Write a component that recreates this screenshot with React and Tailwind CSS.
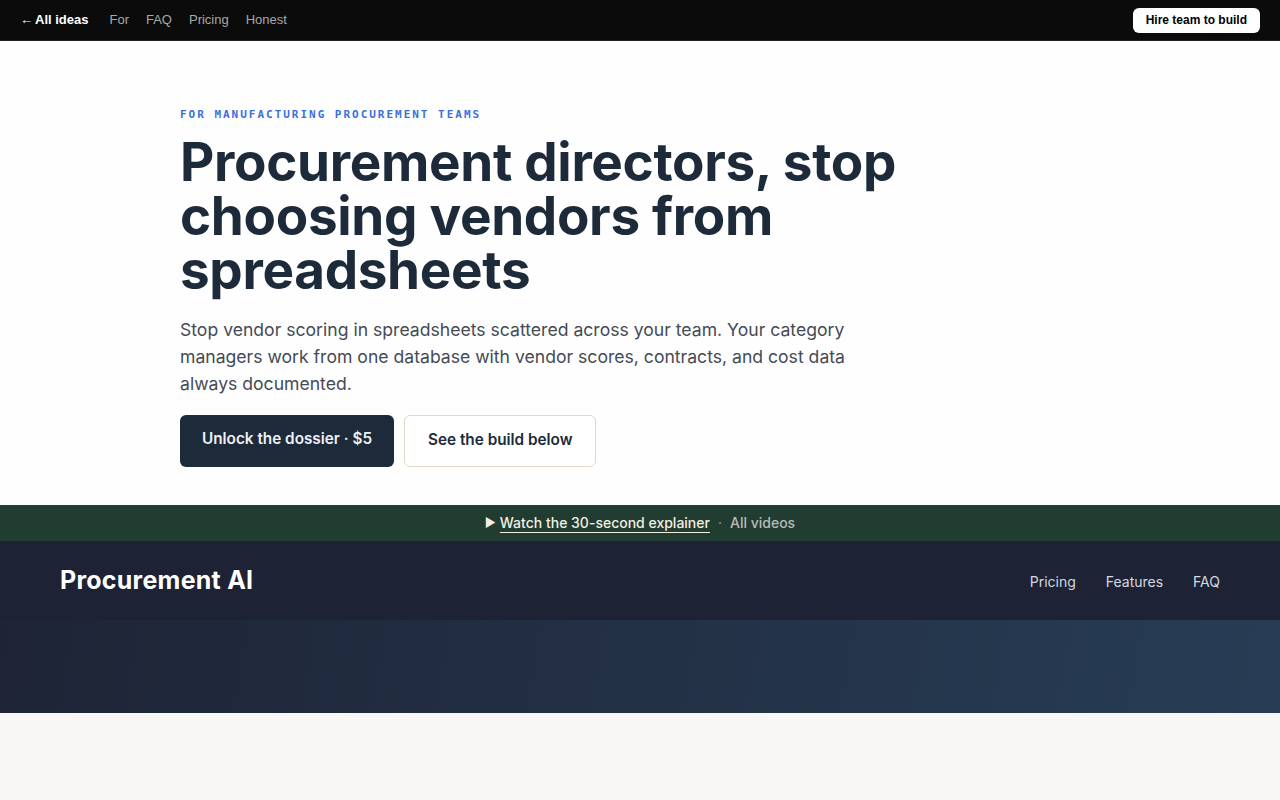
export default function App() {
  return (
    <div className="min-h-screen bg-[#f8f7f5] font-['Inter',sans-serif]">
      {/* top bar */}
      <div className="flex h-[41px] items-center justify-between border-b border-[#222] bg-[#0b0b0b] px-5 font-['Liberation_Sans',Arial,sans-serif] text-[13px]">
        <div className="flex items-center gap-[17px]">
          <span className="mr-[4px] font-bold text-white">
            <span className="mr-[2px] font-normal">←</span>All ideas
          </span>
          <span className="text-[#a8a8a8]">For</span>
          <span className="text-[#a8a8a8]">FAQ</span>
          <span className="text-[#a8a8a8]">Pricing</span>
          <span className="text-[#a8a8a8]">Honest</span>
        </div>
        <button className="h-[25px] rounded-md bg-white px-[13px] text-[12px] font-bold text-black">
          Hire team to build
        </button>
      </div>

      {/* hero */}
      <section className="bg-[#fefefe] pb-[38px] pt-[66px]">
        <div className="ml-[180px] max-w-[740px]">
          <p className="font-['DejaVu_Sans_Mono',monospace] text-[11px] font-bold uppercase tracking-[0.18em] text-[#3b6fe0]">
            For manufacturing procurement teams
          </p>
          <h1 className="mt-[11px] text-[53px] font-bold leading-[54px] tracking-[-0.006em] text-[#1c2a3a]">
            Procurement directors, stop choosing vendors from spreadsheets
          </h1>
          <p className="mt-[19px] max-w-[680px] text-[17.6px] leading-[27px] text-[#454a54]">
            Stop vendor scoring in spreadsheets scattered across your team. Your category managers work from one
            database with vendor scores, contracts, and cost data always documented.
          </p>
          <div className="mt-[18px] flex gap-[10px]">
            <button className="h-[52px] rounded-md bg-[#1c2a3a] px-[22px] pb-[3px] text-[15.3px] font-semibold text-[#eef0f3]">
              Unlock the dossier · $5
            </button>
            <button className="h-[52px] rounded-md border border-[#e2d9c8] bg-white px-[23px] text-[15.3px] font-semibold text-[#1c2a3a]">
              See the build below
            </button>
          </div>
        </div>
      </section>

      {/* video strip */}
      <div className="flex h-[36px] items-center justify-center bg-[#213c30] text-[14px]">
        <span className="mr-[4px] text-[12px] text-[#f3eee2]">▶</span>
        <span className="font-medium text-[#f3eee2] underline decoration-1 underline-offset-[4px]">
          Watch the 30-second explainer
        </span>
        <span className="mx-[8px] text-[#9aa39d]">·</span>
        <span className="font-medium text-[#b8bdb9]">All videos</span>
      </div>

      {/* product header */}
      <header className="flex h-[79px] items-center justify-between bg-[#1d2334] px-[60px] pt-[2px]">
        <span className="text-[25px] font-bold tracking-[0.01em] text-white">Procurement AI</span>
        <nav className="flex gap-[30px] text-[14px] text-[#d4d8e0]">
          <span>Pricing</span>
          <span>Features</span>
          <span>FAQ</span>
        </nav>
      </header>
      <div className="h-[93px] bg-[linear-gradient(100deg,#1e2436,#273d55)]" />
    </div>
  );
}
